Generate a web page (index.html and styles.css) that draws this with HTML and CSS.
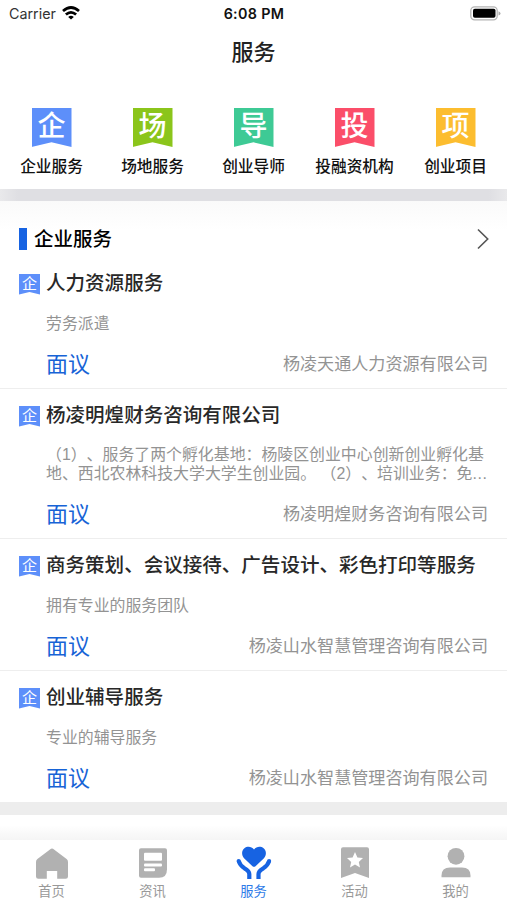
FILE: index.html
```html
<!DOCTYPE html>
<html lang="zh-CN">
<head>
<meta charset="utf-8">
<title>服务</title>
<link rel="stylesheet" href="styles.css">
</head>
<body>
<div class="app">
  <header class="status">
    <div class="carrier">Carrier
      <svg class="wifi" width="18" height="14" viewBox="0 0 18 14" fill="none" stroke="#000" stroke-width="2.7"><path d="M1 5.1Q9-2.1 17 5.1M3.900 8.600Q9 4 14.100 8.600"/><path d="M9 13.600L6.200 10.900Q9 8.600 11.800 10.900Z" fill="#000" stroke="none"/></svg>
    </div>
    <div class="time">6:08 PM</div>
    <svg class="battery" width="31" height="15" viewBox="0 0 31 15"><rect x=".8" y=".8" width="26.4" height="13" rx="3.8" fill="#fff" stroke="#b4b4b4" stroke-width="1.3"/><rect x="3" y="2.8" width="22.5" height="9" rx="1.8"/><path d="M28.5 5.2Q30.5 6 30.5 7.4T28.5 9.6Z" fill="#aaa"/></svg>
  </header>
  <h1 class="title">服务</h1>
  <nav class="cats">
    <a class="cat"><span class="flag blue">企</span><span>企业服务</span></a>
    <a class="cat"><span class="flag green">场</span><span>场地服务</span></a>
    <a class="cat"><span class="flag teal">导</span><span>创业导师</span></a>
    <a class="cat"><span class="flag red">投</span><span>投融资机构</span></a>
    <a class="cat"><span class="flag yellow">项</span><span>创业项目</span></a>
  </nav>
  <div class="band"></div>
  <main class="content">
    <div class="section">
      <h2>企业服务</h2>
      <svg width="14" height="22" viewBox="0 0 14 22" fill="none" stroke="#555" stroke-width="1.6"><path d="M2 1.500L11.700 11L2 20.500"/></svg>
    </div>
    <article class="item">
      <div class="name"><span class="flag small blue">企</span><h3>人力资源服务</h3></div>
      <p class="desc">劳务派遣</p>
      <div class="foot"><span class="price">面议</span><span class="company">杨凌天通人力资源有限公司</span></div>
    </article>
    <article class="item">
      <div class="name"><span class="flag small blue">企</span><h3>杨凌明煌财务咨询有限公司</h3></div>
      <p class="desc">（1）、服务了两个孵化基地：杨陵区创业中心创新创业孵化基<br>地、西北农林科技大学大学生创业园。 （2）、培训业务：免<span class="dots">...</span></p>
      <div class="foot"><span class="price">面议</span><span class="company">杨凌明煌财务咨询有限公司</span></div>
    </article>
    <article class="item">
      <div class="name"><span class="flag small blue">企</span><h3>商务策划、会议接待、广告设计、彩色打印等服务</h3></div>
      <p class="desc">拥有专业的服务团队</p>
      <div class="foot"><span class="price">面议</span><span class="company">杨凌山水智慧管理咨询有限公司</span></div>
    </article>
    <article class="item">
      <div class="name"><span class="flag small blue">企</span><h3>创业辅导服务</h3></div>
      <p class="desc">专业的辅导服务</p>
      <div class="foot"><span class="price">面议</span><span class="company">杨凌山水智慧管理咨询有限公司</span></div>
    </article>
  </main>
  <div class="gap"></div>
  <nav class="tabs">
    <a class="tab"><svg width="36" height="34" viewBox="0 0 36 34" fill="#b1b1b1"><path d="M16 .4Q18-1.200 20 .4L32.600 10.100Q34 11.300 34 13V27.500Q34 29.800 31.700 29.800H23.200V22H12.800V29.800H4.300Q2 29.800 2 27.500V13Q2 11.300 3.400 10.100Z"/></svg><span>首页</span></a>
    <a class="tab"><svg width="36" height="34" viewBox="0 0 36 34"><path d="M6-.8H30Q32-.8 32 1.200V20.200Q32 28.700 24 28.700H6Q4 28.700 4 26.700V1.200Q4-.8 6-.8Z" fill="#b1b1b1"/><g fill="#fff"><rect x="9" y="3.800" width="18" height="8" rx="1"/><rect x="9" y="14.500" width="18" height="3" rx="1"/><rect x="9" y="19.300" width="11" height="3" rx="1"/></g></svg><span>资讯</span></a>
    <a class="tab active"><svg width="36" height="34" viewBox="0 0 36 34"><path d="M16.500 17.200L8.300 9.400C5.300 6.300 5.400 1.900 8.400-.7C11.400-3.100 15.600-2.500 18 .5C20.400-2.500 24.600-3.100 27.600-.7C30.600 1.900 30.700 6.300 27.700 9.400L19.500 17.200Q18 18.500 16.500 17.200Z" fill="#1763e2"/><path d="M2.700 12Q4 16.500 8.500 19.300Q13.300 22 13.300 25V30M33.100 12Q31.800 16.500 27.300 19.300Q22.500 22 22.500 25V30" fill="none" stroke="#1763e2" stroke-width="4.200"/><circle cx="2.700" cy="12" r="2.100" fill="#1763e2"/><circle cx="33.100" cy="12" r="2.100" fill="#1763e2"/></svg><span>服务</span></a>
    <a class="tab"><svg width="36" height="34" viewBox="0 0 36 34"><path d="M6-1.800H30Q32-1.800 32 .2V29L18 24L4 29V.2Q4-1.800 6-1.800Z" fill="#b1b1b1"/><path d="M18 3L20.400 8.400L26 9L21.800 12.900L23 18.500L18 15.600L13 18.500L14.200 12.900L10 9L15.600 8.400Z" fill="#fff"/></svg><span>活动</span></a>
    <a class="tab"><svg width="36" height="34" viewBox="0 0 36 34" fill="#b1b1b1"><circle cx="18" cy="7.300" r="8.400"/><path d="M3.500 28.300V26.500Q3.500 18.500 12 18.500H24Q32.500 18.500 32.500 26.500V28.300Z"/></svg><span>我的</span></a>
  </nav>
</div>
</body>
</html>
```

FILE: styles.css
```css
* { box-sizing: border-box; }
body { margin: 0; background: #fff; font-family: "Liberation Sans", "Noto Sans CJK SC", sans-serif; text-spacing-trim: space-all; }
h1, h2, h3, p { margin: 0; }
.app { width: 507px; height: 900px; display: flex; flex-direction: column; overflow: hidden; background: #fff; }
.status { height: 28px; flex: none; display: grid; grid-template-columns: 1fr auto 1fr; align-items: center; padding: 0 6px 0 9px; font: 15px/28px Inter, sans-serif; color: #333; }
.carrier { display: flex; align-items: center; gap: 6px; font-size: 14.300px; }
.wifi { margin-top: -2px; }
.time { font-weight: 600; font-size: 14.300px; letter-spacing: .35px; color: #111; padding-right: 2px; }
.battery { justify-self: end; margin-top: -1px; }
.title { height: 62px; flex: none; text-align: center; font-size: 22px; line-height: 50px; font-weight: 500; color: #222; }
.cats { height: 99px; flex: none; display: grid; grid-template-columns: repeat(5, 101px); justify-content: center; padding-top: 18px; background: #fff; }
.cat { display: flex; flex-direction: column; align-items: center; gap: 8px; font-size: 15.700px; line-height: 24px; font-weight: 500; color: #111; white-space: nowrap; }
.flag { width: 40px; height: 39px; flex: none; color: #fff; font-size: 28px; line-height: 38px; font-weight: 500; text-align: center; clip-path: polygon(0 0, 100% 0, 100% 100%, 50% 88%, 0 100%); }
.flag.small { width: 21px; height: 21px; font-size: 15px; line-height: 20px; font-weight: 400; }
.blue { background: #5d8ffa; }
.green { background: #8bc51b; }
.teal { background: #3eca95; }
.red { background: #fb4e69; }
.yellow { background: #fcbd2f; }
.band { height: 12px; flex: none; background: linear-gradient(90deg, #e9e9eb, #dfdfe3 18px, #dfdfe3 489px, #e9e9eb); }
.content { flex: none; background: linear-gradient(#fafafa, #fff 30px); }
.section { height: 56px; display: flex; align-items: center; justify-content: space-between; padding: 19px 17px 0 19px; }
.section h2 { border-left: 8px solid #1763e2; padding-left: 7px; font-size: 19.500px; line-height: 22px; font-weight: 500; color: #000; }
.item { padding: 12px 19px 0; height: 132px; border-bottom: 1px solid #eee; }
.item:nth-of-type(2) { height: 150px; }
.item:last-child { border: 0; }
.name { display: flex; align-items: center; gap: 6px; height: 28px; }
.name .flag { margin-top: 2px; }
h3 { font-size: 19.550px; line-height: 28px; font-weight: 500; color: #282828; white-space: nowrap; }
.desc { margin: 17px 0 0 27px; font-size: 15.900px; line-height: 19px; color: #939393; white-space: nowrap; }
.item:nth-of-type(2) .desc { margin-top: 16px; }
.dots { letter-spacing: .6px; }
.foot { display: flex; align-items: center; justify-content: space-between; height: 30px; margin: 14px 0 0 27px; }
.price { font-size: 22px; color: #1763d6; }
.company { font-size: 17.100px; color: #939393; }
.gap { height: 38px; flex: none; margin-top: -1px; border-top: 13px solid #ededed; background: linear-gradient(#fff, #fff 40%, #f5f5f5); }
.tabs { flex: 1; display: grid; grid-template-columns: repeat(5, 101px); justify-content: center; padding-top: 9px; background: #fff; }
.tab { display: flex; flex-direction: column; align-items: center; color: #999; font-size: 13.300px; line-height: 18px; }
.tab svg { overflow: visible; }
.tab.active { color: #2d7be8; }
```
